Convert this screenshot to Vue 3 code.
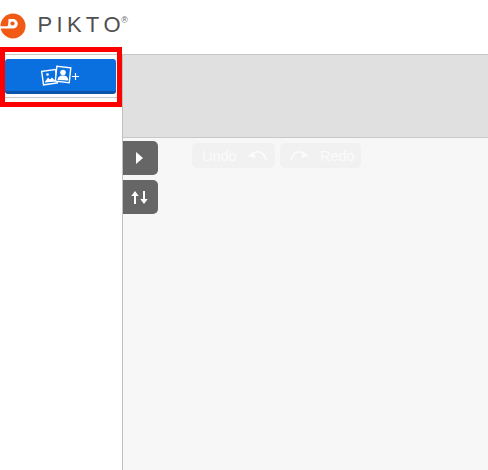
<script setup>
</script>

<template>
  <div class="page">
    <header class="header">
      <svg class="logo-mark" width="26" height="26" viewBox="0 0 26 26">
        <circle cx="13" cy="13" r="12.500" fill="#f05a14" />
        <path d="M8.500 6H13a4.800 4.800 0 0 1 0 9.600H0v-2.400H7.500c1-.5 1-6.700 1-7.200z" fill="#fff" />
        <circle cx="12.500" cy="10.500" r="2.100" fill="#f05a14" />
      </svg>
      <span class="logo-text">PIKT<span class="logo-last">O</span><span class="reg">®</span></span>
    </header>
    <div class="body">
      <aside class="sidebar">
        <button class="add-btn">
          <svg width="40" height="22" viewBox="0 0 40 22" fill="none">
            <g stroke="#fff" stroke-width="1.400">
              <rect x="1.500" y="5.500" width="14" height="13.500" transform="rotate(-8 8 12)" />
              <rect x="15" y="2" width="14" height="15" fill="#0a6fdf" transform="rotate(6 22 10)" />
            </g>
            <path d="M3.500 17.500l3.500-5 2 2 2-2 4 4z" fill="#fff" />
            <circle cx="6.500" cy="9.500" r="1.300" fill="#fff" />
            <circle cx="22" cy="7.500" r="2.800" fill="#fff" />
            <path d="M16.500 15c.5-3.500 2.500-4.500 5.500-4.500s5 1.200 5.300 5z" fill="#fff" />
            <path d="M31 11.500h7M34.500 8v7" stroke="#fff" stroke-width="1.200" />
          </svg>
        </button>
        <div class="side-rule"></div>
      </aside>
      <main class="main">
        <div class="band"></div>
        <div class="stage">
          <div class="side-tabs">
            <button class="tab">
              <svg width="7" height="12" viewBox="0 0 7 12"><path d="M0 0l7 6-7 6z" fill="#fff" /></svg>
            </button>
            <button class="tab">
              <svg width="17" height="13" viewBox="0 0 17 13" fill="#fff">
                <path d="M4 0l3.700 5H5v8H3V5H.300z" />
                <path d="M13 13l3.700-5H14V0h-2v8H9.300z" />
              </svg>
            </button>
          </div>
          <div class="history">
            <div class="hist-btn undo">
              <span>Undo</span>
              <svg width="19" height="11" viewBox="0 0 19 11" fill="none">
                <path d="M5 4C9 .2 15.500 .8 18 10" stroke="#fbfbfb" stroke-width="1.600" />
                <path d="M0 6L5.500 1.500 8 8z" fill="#fbfbfb" />
              </svg>
            </div>
            <div class="hist-btn redo">
              <svg width="19" height="11" viewBox="0 0 19 11" fill="none">
                <path d="M14 4C10 .2 3.500 .8 1 10" stroke="#fbfbfb" stroke-width="1.600" />
                <path d="M19 6L13.500 1.500 11 8z" fill="#fbfbfb" />
              </svg>
              <span>Redo</span>
            </div>
          </div>
        </div>
      </main>
    </div>
    <div class="highlight"></div>
  </div>
</template>

<style>
html, body { margin: 0; background: #fff; }
</style>

<style scoped>
.page {
  position: relative;
  width: 488px;
  height: 470px;
  overflow: hidden;
  background: #fff;
  font-family: "Liberation Sans", Arial, sans-serif;
}
.header {
  height: 54px;
  display: flex;
  align-items: flex-start;
  overflow: hidden;
}
.logo-mark { margin: 13px 0 0 0; flex: none; }
.logo-text {
  display: flex;
  margin: 13px 0 0 11.500px;
  font-size: 22px;
  line-height: 24px;
  letter-spacing: 4.300px;
  color: #505050;
}
.logo-last { letter-spacing: 0; }
.reg {
  margin: 0 0 0 0.500px;
  font-size: 9px;
  line-height: 14px;
  letter-spacing: 0;
  color: #666;
}
.body { display: flex; height: 416px; border-top: 1px solid #c8c8c8; box-sizing: border-box; }
.sidebar { width: 122px; flex: none; padding: 4px 0 0 5px; box-sizing: border-box; }
.add-btn {
  display: flex;
  align-items: center;
  justify-content: center;
  width: 111px;
  height: 35px;
  padding: 2px 0 0;
  border: 0;
  border-bottom: 3px solid #0a55a8;
  border-radius: 3px;
  background: #0a6fdf;
  box-sizing: border-box;
}
.side-rule { height: 1px; margin: 3px 0 0 -5px; background: #c8c8c8; }
.main {
  flex: 1;
  display: flex;
  flex-direction: column;
  border-left: 1px solid #c0c0c0;
}
.band { height: 82px; flex: none; background: #e0e0e0; border-bottom: 1px solid #c8c8c8; }
.stage { flex: 1; display: flex; align-items: flex-start; background: #f7f7f7; }
.side-tabs { width: 35px; padding-top: 3px; display: flex; flex-direction: column; gap: 5px; flex: none; }
.tab {
  display: flex;
  align-items: center;
  justify-content: center;
  width: 35px;
  height: 34px;
  padding: 0 2px 0 0;
  border: 0;
  border-radius: 0 5px 5px 0;
  background: #666;
}
.history { display: flex; gap: 5px; margin: 5px 0 0 34px; }
.hist-btn {
  display: flex;
  align-items: center;
  height: 25px;
  border-radius: 5px;
  background: #f1f1f1;
  color: #fbfbfb;
  font-size: 14.500px;
  box-sizing: border-box;
}
.undo { width: 83px; padding-left: 10px; gap: 11px; }
.redo { width: 81px; padding-left: 10px; gap: 11px; }
.highlight {
  position: absolute;
  left: 0;
  top: 46.500px;
  width: 121.500px;
  height: 60.500px;
  border: 5px solid #f00;
  box-sizing: border-box;
}
</style>
